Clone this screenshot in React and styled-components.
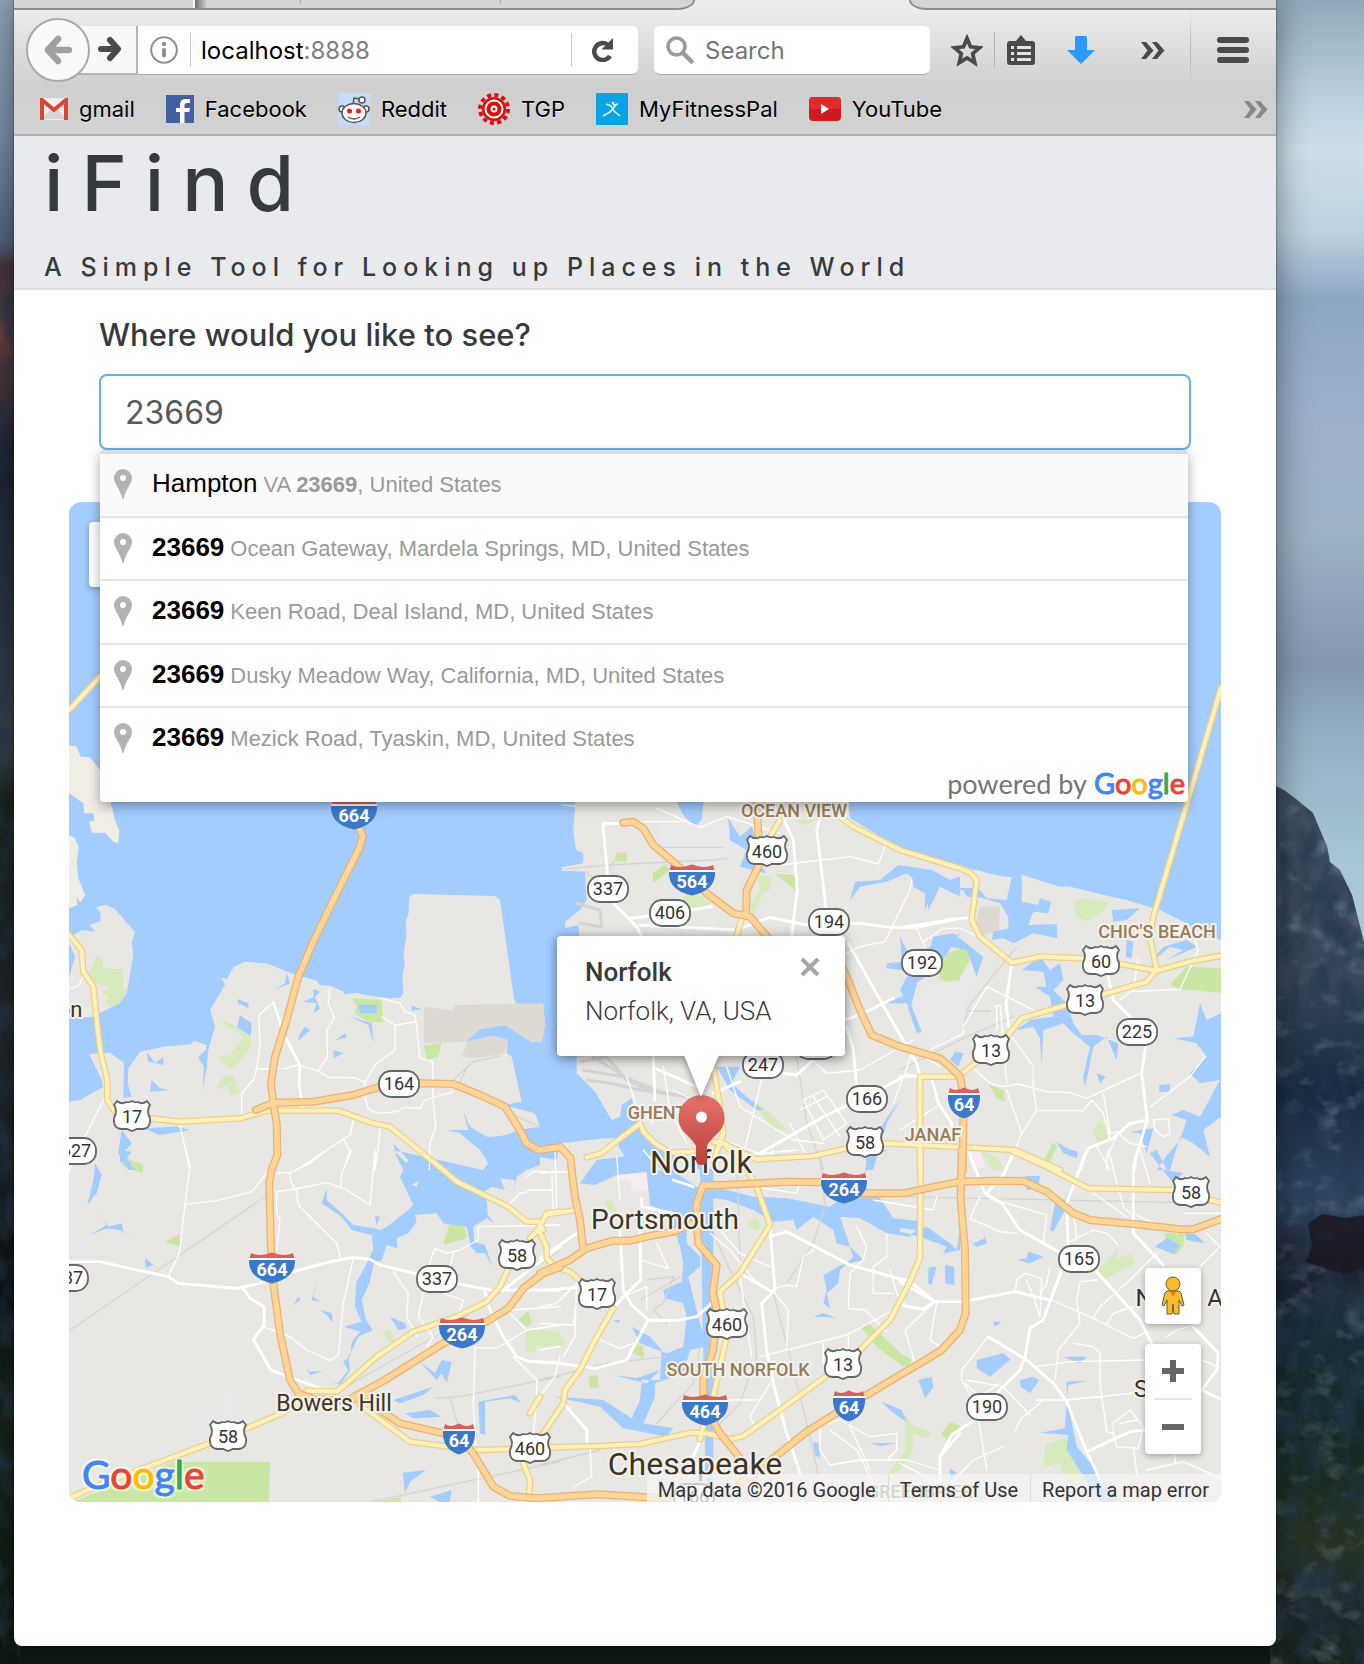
import React from "react";
import styled, { createGlobalStyle } from "styled-components";

const ui = `Inter, "Noto Sans", sans-serif`;
const arial = `"Liberation Sans", Arial, sans-serif`;
const roboto = `Roboto, "Noto Sans", sans-serif`;
const geometric = `Lato, "Noto Sans", sans-serif`;

const GlobalStyle = createGlobalStyle`
  *, *::before, *::after { box-sizing: border-box; }
  body { margin: 0; background: #16211f; font-family: ${ui}; color: #373a3c; }
  button, input { font: inherit; color: inherit; margin: 0; }
  button { padding: 0; border: 0; background: none; cursor: pointer; }
  a { color: inherit; text-decoration: none; }
  h1, h2, p, ul { margin: 0; padding: 0; font-weight: 400; }
  ul { list-style: none; }
  svg { display: block; flex: none; }
`;

/* ---------- Desktop and window ---------- */

const Desktop = styled.div`
  position: relative;
  display: flex;
  min-height: 100vh;
  padding: 0 88px 18px 14px;
  overflow: hidden;
`;

const WallpaperArt = styled.svg`
  position: absolute;
  inset: 0;
  width: 100%;
  height: 100%;
`;

const Window = styled.div`
  position: relative;
  flex: 1;
  min-width: 0;
  display: flex;
  flex-direction: column;
  background: #fff;
  border-radius: 0 0 8px 8px;
  box-shadow: 0 0 2px rgba(0, 0, 0, 0.7), 0 0 34px rgba(0, 0, 0, 0.45);
`;

/* ---------- Browser chrome ---------- */

const TabStrip = styled.div`
  display: flex;
  justify-content: space-between;
  height: 10px;
  background: #ececec;
`;

const TabsBefore = styled.div`
  display: flex;
  width: 681px;
  background: #d4d4d4;
  border: solid #8c8c8c;
  border-width: 0 2px 2px 0;
  border-radius: 0 0 18px 0 / 0 0 10px 0;
`;

const TabsAfter = styled.div`
  flex: 1;
  margin-left: 214px;
  background: #d4d4d4;
  border: solid #8c8c8c;
  border-width: 0 0 2px 2px;
  border-radius: 0 0 0 18px / 0 0 0 10px;
`;

const PinnedTab = styled.div`
  width: 181px;
  border-right: 2px solid #f4f4f4;
`;

const PinnedShadow = styled.div`
  width: 12px;
  background: linear-gradient(90deg, #6f6f6f, #d4d4d4);
`;

const TabStub = styled.div`
  width: ${(p) => p.$width}px;
  height: 4px;
  border-right: 1px solid #a9a9a9;
`;

const Chrome = styled.div`
  background: linear-gradient(#ececec, #cfcfcf 78px, #d2d2d2);
  border-bottom: 2px solid #b0b0b0;
`;

const Toolbar = styled.div`
  display: flex;
  align-items: center;
  height: 80px;
  padding: 0 27px 0 12px;
`;

const BackButton = styled.button`
  position: relative;
  z-index: 1;
  display: grid;
  place-items: center;
  width: 64px;
  height: 64px;
  border: 2px solid #a9a9a9;
  border-radius: 50%;
  background: #fafafa;
`;

const ForwardButton = styled.button`
  display: flex;
  align-items: center;
  justify-content: flex-end;
  width: 62px;
  height: 49px;
  margin-left: -14px;
  padding-right: 14px;
  background: #f8f8f8;
  border-right: 2px solid #b4b4b4;
  border-bottom: 2px solid #b4b4b4;
`;

const UrlBar = styled.div`
  display: flex;
  align-items: center;
  flex: 1;
  height: 49px;
  padding: 0 20px 0 12px;
  background: #fff;
  border-bottom: 1px solid #aaa;
  border-radius: 0 6px 6px 0;
`;

const FieldRule = styled.span`
  width: 1px;
  height: 34px;
  margin: ${(p) => p.$margin};
  background: #c6c6c6;
`;

const Address = styled.span`
  flex: 1;
  padding-top: 2px;
  font-size: 24px;
  line-height: 32px;
  color: #808080;
`;

const Host = styled.span`
  color: #000;
`;

const SearchBox = styled.label`
  display: flex;
  align-items: center;
  width: 276px;
  height: 49px;
  margin-left: 16px;
  padding-left: 12px;
  background: #fff;
  border-bottom: 1px solid #aaa;
  border-radius: 6px;
`;

const SearchInput = styled.input`
  flex: 1;
  min-width: 0;
  padding: 2px 0 0 11px;
  border: 0;
  outline: 0;
  background: none;
  font-size: 24px;
  line-height: 32px;
  &::placeholder { color: #757575; opacity: 1; }
`;

const ToolIcons = styled.div`
  display: flex;
  align-items: center;
  margin-left: 21px;
`;

const ToolButton = styled.button`
  display: grid;
  place-items: center;
  width: 32px;
  height: 36px;
  margin-left: ${(p) => p.$gap || 0}px;
`;

const ToolRule = styled.span`
  width: 1px;
  height: ${(p) => p.$height}px;
  margin-left: ${(p) => p.$gap}px;
  background: ${(p) => (p.$fade ? "linear-gradient(#e6e6e6, #b4b4b4, #d2d2d2)" : "#b4b4b4")};
`;

const Bookmarks = styled.nav`
  display: flex;
  align-items: center;
  height: 44px;
  padding: 0 8px 6px 26px;
  font-size: 22px;
  line-height: 32px;
  color: #000;
`;

const Bookmark = styled.a`
  display: flex;
  align-items: center;
  gap: 11px;
  margin-right: 31px;
  text-shadow: 0 1px 0 #eee;
`;

const Spacer = styled.span`
  flex: 1;
`;

/* ---------- Page ---------- */

const Header = styled.header`
  height: 154px;
  padding: 0 30px;
  background: #e9eaed;
  border-bottom: 2px solid #dfe0e1;
`;

const Brand = styled.h1`
  font-size: 77px;
  font-weight: 500;
  line-height: 94px;
  letter-spacing: 18px;
`;

const Tagline = styled.p`
  margin-top: 20px;
  font-size: 25px;
  font-weight: 500;
  line-height: 34px;
  letter-spacing: 6px;
`;

const Main = styled.main`
  padding: 26px 55px 144px;
`;

const SearchForm = styled.form`
  position: relative;
  z-index: 2;
  padding: 0 30px;
  margin-bottom: 52px;
`;

const Question = styled.label`
  display: block;
  margin-bottom: 20px;
  font-size: 31px;
  font-weight: 500;
  line-height: 38px;
`;

const PlaceInput = styled.input`
  display: block;
  width: 100%;
  height: 76px;
  padding: 0 24px;
  border: 2px solid #66afe9;
  border-radius: 8px;
  outline: 0;
  background: #fff;
  font-size: 32px;
  color: #55595c;
`;

const Suggestions = styled.div`
  position: absolute;
  top: 100%;
  left: 31px;
  right: 33px;
  height: 352px;
  background: #fff;
  border-top: 4px solid #dcdcdc;
  border-radius: 4px;
  box-shadow: 0 4px 12px rgba(0, 0, 0, 0.34);
  font-family: ${arial};
`;

const Suggestion = styled.li`
  display: flex;
  align-items: center;
  height: 64px;
  padding: 0 14px 2px;
  gap: 20px;
  border-top: 2px solid #e6e6e6;
  color: #999;
  font-size: 22px;
  line-height: 60px;
  cursor: default;
  &:nth-child(even) { height: 63px; }
  &:first-child { height: 62px; border-top: 0; background: #fafafa; }
`;

const SuggestionText = styled.span`
  white-space: nowrap;
`;

const Match = styled.span`
  margin-right: 6px;
  font-size: 26px;
  font-weight: ${(p) => (p.$bold ? 700 : 400)};
  color: #000;
`;

const PoweredBy = styled.p`
  position: absolute;
  right: 3px;
  bottom: 0;
  font-family: ${geometric};
  font-size: 27px;
  line-height: 36px;
  color: #757575;
`;

const Wordmark = styled.span`
  margin-left: 7px;
  font-size: 29px;
  -webkit-text-stroke: 1px currentColor;
`;

const Tint = styled.span`
  color: ${(p) => p.$color};
`;

const MapPanel = styled.section`
  position: relative;
  height: 1000px;
  overflow: hidden;
  border-radius: 12px;
  font-family: ${roboto};
`;

const MapArt = styled.svg`
  width: 100%;
  height: 100%;
`;

const MapTypeControl = styled.div`
  position: absolute;
  top: 20px;
  left: 20px;
  width: 200px;
  height: 65px;
  background: #fff;
  border-radius: 4px;
  box-shadow: 0 2px 6px rgba(0, 0, 0, 0.3);
`;

const InfoWindow = styled.div`
  position: absolute;
  top: 434px;
  left: calc(50% - 88px);
  width: 288px;
  height: 120px;
  padding: 17px 28px;
  background: #fff;
  border-radius: 4px;
  box-shadow: 0 2px 12px rgba(0, 0, 0, 0.5);
  font-size: 26px;
  line-height: 39px;
  color: #373a3c;
`;

const InfoTitle = styled.h2`
  font-size: 26px;
  font-weight: 500;
`;

const InfoAddress = styled.p`
  font-weight: 300;
  white-space: nowrap;
`;

const CloseButton = styled.button`
  position: absolute;
  top: 19px;
  right: 23px;
  width: 24px;
  height: 24px;
  display: grid;
  place-items: center;
`;

const InfoTail = styled.svg`
  position: absolute;
  top: 119px;
  left: 126px;
  overflow: visible;
  filter: drop-shadow(0 3px 3px rgba(0, 0, 0, 0.4));
  clip-path: inset(0 -16px -16px -16px);
`;

const MapControls = styled.div`
  position: absolute;
  right: 20px;
  bottom: 48px;
  display: flex;
  flex-direction: column;
  gap: 20px;
`;

const ControlCard = styled.div`
  width: 56px;
  background: #fff;
  border-radius: 4px;
  box-shadow: 0 2px 6px rgba(0, 0, 0, 0.3);
`;

const ControlButton = styled.button`
  display: grid;
  place-items: center;
  width: 56px;
  height: ${(p) => (p.$tall ? 56 : 54)}px;
`;

const ControlRule = styled.hr`
  height: 2px;
  margin: 0 9px;
  border: 0;
  background: #e6e6e6;
`;

const MapLogo = styled.a`
  position: absolute;
  left: 13px;
  bottom: 2px;
  font-family: ${geometric};
  font-size: 39px;
  line-height: 52px;
  -webkit-text-stroke: 1px currentColor;
  text-shadow: 0 0 3px #fff8, 2px 2px 2px #fffa, -2px -2px 2px #fffa, 2px -2px 2px #fffa, -2px 2px 2px #fffa;
`;

const Attribution = styled.div`
  position: absolute;
  right: 0;
  bottom: 0;
  display: flex;
  height: 28px;
  background: rgba(245, 245, 245, 0.72);
  font-size: 20px;
  line-height: 32px;
  color: #333;
`;

const AttributionItem = styled.span`
  padding: 0 12px 0 11px;
  & + & { border-left: 1px solid #dcdcdc; }
`;

/* ---------- Small drawings ---------- */

const BackArrow = () => (
  <svg width="28" height="30" viewBox="0 0 28 30" fill="none" stroke="#a0a0a0" strokeWidth="6.5" strokeLinecap="round" strokeLinejoin="round">
    <path d="M25 15H6M14 4 4 15l10 11" />
  </svg>
);
const ForwardArrow = () => (
  <svg width="24" height="26" viewBox="0 0 24 26" fill="none" stroke="#4a4a4a" strokeWidth="6" strokeLinecap="round" strokeLinejoin="round">
    <path d="M3 13h15M12 4l8 9-8 9" />
  </svg>
);
const InfoIcon = () => (
  <svg width="28" height="28" viewBox="0 0 28 28">
    <circle cx="14" cy="14" r="12.8" fill="none" stroke="#8f8f8f" strokeWidth="2" />
    <circle cx="14" cy="8" r="2.2" fill="#8f8f8f" />
    <rect x="12" y="12" width="4" height="9.5" rx="2" fill="#8f8f8f" />
  </svg>
);
const ReloadIcon = () => (
  <svg width="24" height="24" viewBox="0 0 24 24">
    <path d="M20 18A8.500 8.500 0 1 1 17.500 6.500" fill="none" stroke="#4a4a4a" strokeWidth="4.500" />
    <path d="M23 0v11.500H11.500z" fill="#4a4a4a" />
  </svg>
);
const SearchIcon = () => (
  <svg width="28" height="28" viewBox="0 0 28 28" fill="none" stroke="#999" strokeLinecap="round">
    <circle cx="10.5" cy="10.5" r="8.5" strokeWidth="3.5" />
    <path d="m17 17 8.500 8.500" strokeWidth="4.500" />
  </svg>
);
const StarIcon = () => (
  <svg width="32" height="33" viewBox="0 0 32 33">
    <path d="m16 4.500 3.500 8.300 9 .9-6.800 6 2 9L16 24l-7.700 4.700 2-9-6.800-6 9-.9z" fill="none" stroke="#4a4a4a" strokeWidth="3.800" />
  </svg>
);
const ListIcon = () => (
  <svg width="28" height="31" viewBox="0 0 28 31">
    <path d="M3 6h6l5-6 5 6h6a3 3 0 0 1 3 3v18a3 3 0 0 1-3 3H3a3 3 0 0 1-3-3V9a3 3 0 0 1 3-3z" fill="#4a4a4a" />
    <path d="M4 11h3v3H4zM10 11h14v3H10zM4 17h3v3H4zM10 17h14v3H10zM4 23h3v3H4zM10 23h14v3H10z" fill="#e2e2e2" />
  </svg>
);
const DownloadIcon = () => (
  <svg width="28" height="28" viewBox="0 0 28 28">
    <path d="M8 1.500Q8 0 9.500 0h9Q20 0 20 1.500V14h8L14 28 0 14h8z" fill="#2b98fb" />
  </svg>
);
const Chevrons = ({ color }) => (
  <svg width="24" height="17" viewBox="0 0 24 17" fill={color}>
    <path d="M0 0h5l7.500 8.500L5 17H0l6.500-8.500zM11 0h5l7.500 8.500L16 17h-5l6.500-8.500z" />
  </svg>
);
const MenuIcon = () => (
  <svg width="32" height="26" viewBox="0 0 32 26" fill="#4a4a4a">
    <rect width="32" height="6" rx="3" />
    <rect y="10" width="32" height="6" rx="3" />
    <rect y="20" width="32" height="6" rx="3" />
  </svg>
);
const GmailIcon = () => (
  <svg width="28" height="22" viewBox="0 0 28 22">
    <rect width="28" height="22" rx="2" fill="#eee" />
    <path d="m2 21 9-10h6l9 10z" fill="#d6d6d6" />
    <path d="M2 22V2l12 10L26 2v20" fill="none" stroke="#db4437" strokeWidth="4" />
  </svg>
);
const FacebookIcon = () => (
  <svg width="28" height="28" viewBox="0 0 28 28">
    <rect width="28" height="28" fill="#4460a0" />
    <path d="M14 28V17h-4v-4h4v-3c0-4 2-6 6-6h4v4h-3c-2 0-2.500 1-2.500 2.500V13H24l-.7 4h-4.800v11z" fill="#fff" />
  </svg>
);
const RedditIcon = () => (
  <svg width="32" height="32" viewBox="0 0 32 32">
    <rect width="32" height="32" fill="#c4dcf6" />
    <g fill="#fff" stroke="#555" strokeWidth="1.500">
      <path d="m15 12 1-7 6 1" fill="none" />
      <circle cx="24" cy="7" r="3" />
      <circle cx="4" cy="16" r="3" />
      <circle cx="28" cy="16" r="3" />
      <ellipse cx="16" cy="20" rx="12" ry="9.5" />
      <path d="M10 24q6 4 12 0" fill="none" />
    </g>
    <circle cx="11.5" cy="18" r="2.5" fill="#ee1c1c" />
    <circle cx="20.5" cy="18" r="2.5" fill="#ee1c1c" />
  </svg>
);
const GearIcon = () => (
  <svg width="32" height="32" viewBox="0 0 32 32" fill="none" stroke="#e00b0b">
    <circle cx="16" cy="16" r="14" strokeWidth="4" strokeDasharray="4 3.330" />
    <circle cx="16" cy="16" r="12" fill="#e00b0b" stroke="none" />
    <circle cx="16" cy="16" r="8.5" stroke="#fff" strokeWidth="2" />
    <circle cx="16" cy="16" r="2.5" stroke="#fff" strokeWidth="2" />
  </svg>
);
const RunnerIcon = () => (
  <svg width="32" height="32" viewBox="0 0 32 32">
    <rect width="32" height="32" fill="#0aa3e4" />
    <path d="m10 11 5 2 3 5 6 5M20 12l-6 7-7 4M17 12l5-1" fill="none" stroke="#d8f0fb" strokeWidth="1.600" />
    <circle cx="17" cy="10" r="1.3" fill="#fff" />
  </svg>
);
const YouTubeIcon = () => (
  <svg width="32" height="24" viewBox="0 0 32 24">
    <rect width="32" height="24" rx="4" fill="#cd1c1f" />
    <rect width="32" height="12" rx="4" fill="#e22b28" />
    <path d="m12 7 8 5-8 5z" fill="#fff" />
  </svg>
);
const PinIcon = () => (
  <svg width="18" height="30" viewBox="0 0 18 30">
    <path fillRule="evenodd" d="M9 0a9 9 0 0 1 9 9c0 6-6 10-8.500 21h-1C6 19 0 15 0 9a9 9 0 0 1 9-9zm0 6a3 3 0 1 0 0 6 3 3 0 0 0 0-6z" fill="#b3b3b3" />
  </svg>
);
const PegmanIcon = () => (
  <svg width="24" height="40" viewBox="0 0 24 40" stroke="#6b5a2f" strokeWidth="1">
    <path d="M6 15h12l2 2 3 12-2 1-3-6v14h-5l-1-10-1 10H6V24l-3 6-2-1L4 17z" fill="#fbbc2c" />
    <path d="m8.500 15.500 3.500 5 3.500-5z" fill="#e0801d" stroke="none" />
    <circle cx="12" cy="8" r="7" fill="#fbbc2c" />
  </svg>
);

/* ---------- Map data: six survey sheets, three units to a pixel ---------- */

const SHEETS = {
  A: [60, 790],
  B: [540, 790],
  C: [900, 790],
  D: [60, 1150],
  E: [540, 1150],
  F: [900, 1150],
};

const trace = (line) => {
  let [ox, oy] = SHEETS.A;
  const out = [];
  const tokens = line.split(/\s+/).filter(Boolean);
  for (let i = 0; i < tokens.length; i += 1) {
    if (SHEETS[tokens[i]]) [ox, oy] = SHEETS[tokens[i]];
    else {
      out.push(`${(ox + tokens[i] / 3).toFixed(1)} ${(oy + tokens[i + 1] / 3).toFixed(1)}`);
      i += 1;
    }
  }
  return out;
};
const lines = (list) => list.map((l) => `M${trace(l).join("L")}`).join("");
const areas = (list) => list.map((l) => `M${trace(l).join("L")}Z`).join("");

const beige = [
  "A 27 -135 50 -130 62 -100 90 -98 120 -60 152 36 165 90 178 122 175 160 160 155 135 128 95 128 87 95 103 92 100 70 72 70 70 40 35 15 27 10",
  "A 27 135 45 145 57 175 50 215 55 265 75 315 62 338 50 320 52 345 27 355",
];

const land = [
  "A 27 440 40 435 65 420 105 425 90 405 122 392 120 365 108 352 138 344 165 358 225 427 215 455 220 495 200 610 175 642 120 668 100 680 27 685",
  "A 27 935 60 930 130 890 125 870 88 793 150 788 192 818 190 925 215 920 203 880 205 835 240 785 310 770 395 762 400 752 440 765 438 778 415 803 432 830 428 900 440 830 445 780 465 710 450 660 495 585 483 562 500 567 522 530 555 515 618 520 700 552 770 572 780 585 815 588 850 605 852 613 890 608 920 616 990 625 1022 622 1030 610 1027 560 1035 520 1030 500 1040 430 1036 395 1045 375 1048 320 1060 312 1305 318 1320 330 1362 625 1368 640 1450 645 1455 705 1445 755 1415 755 1335 705 1260 718 1215 755 1300 738 1343 750 1340 790 1355 800 1385 935 1330 945 1425 970 1440 1010 1375 1020 1340 1035 1300 1040 1330 1080 1290 1140 1370 1110 1430 1100 1490 1110 B 60 1060 195 1045 240 1045 235 1070 270 1120 400 1090 E 520 60 520 1200 D 0 1200 0 0 A 27 1140",
  "B 105 0 105 60 100 120 108 180 130 190 130 220 65 232 65 242 135 245 140 330 120 360 75 395 75 415 115 405 118 436 118 760 110 800 110 850 165 905 215 990 240 980 245 945 275 925 290 990 300 1010 330 1060 420 1100 480 1140 E 500 1200 F 963 1200 C 963 450 930 440 850 395 780 360 680 330 640 322 510 290 480 290 365 254 335 262 300 258 220 238 0 178 B 1080 175 930 85 920 0",
  "B 60 42 105 45 105 52 70 48",
];

const tan = [
  "A 1092 650 1180 662 1180 645 1450 640 1455 705 1445 758 1405 750 1335 705 1260 718 1215 755 1092 760",
  "A 1222 755 1300 738 1343 750 1335 790 1250 805 1205 800",
  "C 240 350 300 350 297 420 240 440 225 410",
];

const campus = [
  "B 360 100 560 100 600 165 520 240 400 215 360 150",
  "C 180 520 240 500 250 530 190 640 200 700 100 780 60 760 40 600 120 590",
  "B 1130 600 1260 560 1260 740 1180 740",
  "D 495 710 520 710 515 815 490 815",
  "D 395 805 580 805 580 830 395 830",
];

const pink = ["E 240 60 320 72 325 120 275 125 272 95 232 85", "F 200 0 240 0 255 50 230 55"];

const parks = [
  "A 875 625 965 630 970 695 930 697 885 672 890 645",
  "A 1092 768 1145 758 1135 800 1100 810",
  "D 180 15 250 45 248 70 190 50",
  "D 27 1060 340 936 630 936 627 1056 27 1056",
  "D 315 275 360 252 360 292",
  "D 1170 215 1215 232 1220 265 1150 285",
  "D 1375 510 1405 482 1415 520 1400 530",
  "D 940 1056 1023 1042 1023 1056",
  "B 230 187 260 190 260 217 228 212",
  "B 340 280 337 250 375 222 390 240",
  "B 705 252 765 255 765 300",
  "B 1210 510 1260 475 1260 570 1215 575 1195 550",
  "C 135 490 205 470 210 510 185 555 150 575 115 565 140 530",
  "C 810 585 860 530 963 535 963 608 840 598",
  "C 265 882 310 900 315 935 290 925",
  "C 460 1055 470 1070 450 1115 430 1115",
  "E 270 605 290 580 310 590 312 625",
  "E 145 680 172 675 177 712 150 715",
  "E 965 535 985 520 1115 640 1090 650 1010 590",
  "E 1205 850 1235 815 1260 830 1220 870",
  "F 790 250 855 250 850 290 825 315",
  "F 0 610 35 630 25 648 0 635",
  "F 125 855 150 815 178 830 150 870",
];

const lightParks = [
  "A 87 550 110 497 130 510 130 535 188 538 190 590 200 610 175 645 135 645 145 620 125 605 150 590 105 580",
  "A 470 685 510 700 572 740 572 775 515 840 470 800 510 795 550 740",
  "A 470 890 490 860 520 855 540 910 515 918 500 885 480 900",
  "B 655 255 695 262 690 300 670 310 640 375 630 350 660 300",
  "B 425 320 470 310 515 340 450 360",
  "B 640 930 680 960 740 1020 690 1015",
  "B 760 90 830 90 790 105",
  "C 520 335 560 325 630 338 600 370 560 395 530 380",
  "C 580 1020 600 990 625 1010 620 1050 590 1055",
  "C 240 1080 290 1100 310 1140 280 1140",
  "D 965 545 990 540 1005 575 990 575",
  "D 1400 535 1450 545 1500 545 1500 585 1430 590 1420 608 1395 605",
  "E 0 540 40 540 78 575 70 585 0 585",
  "E 620 220 645 200 665 230 650 245",
  "E 195 155 215 150 230 185 205 180",
  "E 1095 790 1110 820 1175 850 1160 865 1120 850 1120 900 1080 960 1040 980 1095 900",
  "F 600 355 655 295 650 330 690 310 705 340 610 390 595 375",
  "F 437 880 500 865 510 910 570 1000 500 1000 480 940 430 950",
];

const water = [
  "D 1000 0 1040 40 1020 80 1060 165 1045 180 980 230 960 240 940 235 880 225 845 190 800 150 800 115 785 160 845 200 875 240 935 255 940 300 915 350 888 400 885 470 905 515 852 530 900 545 875 575 870 620 850 635 865 660 835 700 810 690 840 705 870 660 865 620 895 560 938 540 918 510 905 450 928 400 942 340 965 330 980 285 1012 295 1010 265 1045 250 1070 215 1065 195 1130 190 1150 220 1220 230 1232 290 1250 308 1275 310 1297 348 1275 285 1243 275 1240 230 1280 205 1303 220 1283 195 1280 145 1265 130 1295 110 1335 120 1320 85 1365 90 1360 130 1370 80 1400 60 1440 45 1440 0 A 1440 1080 1400 1060 1330 1040 1280 1040 1230 1010 1210 965 1225 1020 1160 1020 1200 1030 1260 1080 1285 1120 1270 1140",
  "E 170 30 120 100 165 105 230 75 320 65 330 165 400 195 400 225 420 290 430 340 425 395 370 420 375 445 430 460 440 500 430 590 380 610 300 580 275 530 330 560 365 600 360 690 305 690 300 750 275 805 190 750 120 745 40 740 115 755 180 770 250 835 380 860 400 835 310 820 345 740 345 700 430 670 450 600 500 590 475 500 445 380 480 350 480 320 440 280 440 230 470 215 460 180 490 140 560 150 640 180 700 215 760 210 770 240 820 200 880 240 890 280 930 290 970 330 905 345 850 375 860 420 850 460 870 475 860 430 895 400 900 360 940 320 920 260 900 200 960 205 1040 250 1110 260 1150 215 1060 205 1010 130 970 110 985 30 1040 0 980 0 975 90 870 170 740 145 640 140 540 115 470 110 410 70 400 0",
  "B 410 36 490 36 485 90 465 110 430 75",
  "B 565 85 600 140 635 110 655 160 640 200 680 250 600 230 620 180 570 150",
  "C 335 262 365 255 365 335 415 345 420 325 453 335 445 370 400 365 385 405 470 402 472 445 400 430 340 460 310 445 275 450 280 425 325 415 325 380 300 340 240 322 200 320 190 300 130 285 90 310 75 365 75 310 40 290 35 250 0 235 60 240 100 265 160 290 235 295 260 325 320 330",
  "C 420 500 450 540 480 520 490 570 460 600 500 640 520 700 545 735 590 735 655 760 650 810 620 740 580 770 555 890 550 860 570 770 520 730 490 700 430 720 425 825 420 745 400 710 350 720 390 690 460 680 450 620 405 590 440 590 430 545 365 540",
  "C 963 670 920 690 900 640 880 740 820 745 890 760 920 800 870 850 900 880 960 870 900 980 850 960 815 975 860 990 840 1050 790 1110 770 1140 C 810 1140 840 1040 880 1060 930 1100 910 1020 963 980",
  "C 100 440 160 430 250 500 230 560 200 480 150 470 80 520",
  "C 470 1055 500 1075 533 1085 530 1105 490 1090",
  "C 590 850 617 860 600 880",
  "C 778 885 810 882 808 905 778 905",
  "C 635 360 720 355 680 390 640 395",
  "C 750 520 810 470 850 480 800 510 890 470 860 450 790 470",
  "C 680 450 700 455 695 505 678 500",
  "C 0 440 25 490 5 510",
  "C 20 560 60 545 30 660 0 600",
  "C 165 785 190 790 175 830 150 810",
  "C 690 1025 760 1015 740 1090 720 1030",
  "B 930 330 945 275 1020 270 1075 225 1175 240 1230 270 1260 260 1260 320 1200 290 1165 360 1160 300 1100 250 1040 275 960 290",
  "B 1040 520 1090 515 1080 440 1105 490 1150 480 1260 430 1190 540 1110 590 1115 650 1145 725 1130 730 1100 640 1040 640 1105 610 1120 560 1085 540 1040 535",
  "B 530 830 600 830 575 880 620 920 670 960 650 960 570 900",
  "B 1085 920 1030 1000 1000 1060 975 1140 1000 1140 1020 1060 1045 990",
  "A 532 627 566 640 565 655 535 640",
  "A 540 675 575 700 572 738 532 712",
  "A 680 548 690 580 640 602 675 580",
  "A 760 597 780 605 765 620 780 655 760 670 770 640 728 635 760 622",
  "A 735 710 750 720 715 752 718 735",
  "A 820 780 850 790 822 805",
  "A 825 752 855 730 860 740",
  "A 895 643 950 645 950 670 900 670",
  "A 870 680 935 700 940 760 925 705",
  "A 1055 647 1085 658 1055 662",
  "A 260 785 285 820 310 800 310 825 265 815",
  "A 275 870 300 895 328 900 270 905",
  "A 27 460 45 500 27 560",
  "A 185 1020 215 1060 190 1090 225 1140 205 1140 175 1090",
  "A 1000 1060 1045 1110 1030 1140 1010 1100",
  "A 250 1015 350 1010 390 1020 300 1035",
  "D 180 0 215 5 200 25 180 40",
  "D 105 40 125 75 110 130 82 165 100 90",
  "D 120 185 145 230 185 220 190 245 235 280 180 240 140 235 90 255 140 225",
  "D 255 325 280 345 257 353",
  "D 700 465 715 440 722 450",
  "D 775 385 760 440 780 455 755 450",
  "D 780 480 815 490 818 518 800 495",
  "D 990 500 1035 520 1040 535 1015 540",
  "D 1080 635 1125 670 1145 630 1175 635 1160 700 1145 670 1130 690",
  "D 1000 750 1120 710 1090 735 1020 760",
  "D 1035 790 1110 780 1145 800 1060 805",
  "D 1255 755 1365 735 1385 760 1350 745 1275 755 1275 855 1260 850",
  "D 1028 968 1098 960 1050 995 1035 1028",
  "D 1110 1040 1175 1020 1170 1056 1140 1056",
  "D 740 655 750 665 790 663 750 675",
  "D 1055 105 1075 93 1070 110",
  "D 945 198 960 200 950 225",
  "E 820 500 850 490 890 505 850 500",
  "E 220 675 290 685 360 660 320 700",
  "E 220 510 240 510 235 520",
  "E 1165 355 1190 350 1175 400 1165 400",
  "E 1215 360 1240 360 1240 405 1220 400",
  "E 1135 690 1175 680 1180 710 1155 745",
  "E 1025 755 1085 780 1100 815 1060 790",
  "E 820 875 835 880 840 925 825 915",
  "E 990 880 1070 880 1020 888",
  "F 0 235 60 240 80 230 150 280 170 300 180 240 180 300 130 310 140 290 60 260 0 245",
  "F 220 280 255 265 250 240 260 280 230 292 200 265",
  "F 465 160 495 180 460 245 450 240",
  "F 765 290 800 265 840 285 820 312",
  "F 855 250 885 252 915 280 860 270",
  "F 375 78 420 78 415 115 380 120",
  "F 135 345 163 350 163 405 135 400",
  "F 90 350 108 352 95 405 85 400",
  "F 350 330 380 325 385 305 430 320 390 340",
  "F 230 630 310 610 332 628 270 680 230 655",
  "F 360 690 400 680 418 690 390 730 362 710",
  "F 55 690 85 685 98 715 75 745",
  "F 420 848 495 835 500 750 520 840 530 890 590 960 655 1056 600 1056 500 900 505 855",
  "F 280 515 305 515 285 530",
  "F 500 695 560 692 505 705 500 745",
  "F 490 620 560 620 540 640",
  "F 150 955 170 970 150 990",
  "F 770 0 800 60 850 70 820 100 780 50 750 10",
];

const rails = [
  "D 27 543 615 140",
  "B 65 238 200 225 520 210 560 205",
  "B 360 172 550 172",
  "B 140 245 180 290 230 200",
  "B 770 800 800 1000 850 1140 E 840 20 855 170 820 280 740 400",
  "E 510 225 560 340 640 500 650 620 600 760 500 860",
  "E 700 430 750 620 810 860 840 1000",
  "E 0 690 200 640 380 620",
  "E 320 390 400 380 370 460 340 480 380 520",
  "E 300 450 420 380",
  "E 480 590 460 700 350 820",
  "C 0 840 200 740 340 680",
  "C 190 720 205 650 350 470",
  "C 205 663 270 663",
  "F 0 140 963 160",
  "D 830 725 1160 540 1500 300",
  "D 1125 745 1200 740 1500 680",
  "D 1170 740 1195 830",
  "D 930 1056 1500 935 E 0 945 180 900",
  "A 1180 870 1240 815 1320 798",
  "A 1200 880 1220 830",
  "A 1350 970 1440 1010",
  "E 590 0 600 340",
];

const docks = [
  "B 110 340 180 360 185 410 120 400",
  "B 120 815 200 800 260 870 330 900 440 920 300 900 210 880 140 870",
  "B 130 840 250 860 360 905",
  "B 160 800 300 890",
];

const streets = [
  "A 810 597 805 640 823 685 800 720 803 800 775 843",
  "A 590 837 675 835 715 825 775 843 805 862 885 863 915 878 945 825 1005 780 1005 705 965 680",
  "A 640 637 597 675 600 770 590 835 580 870 545 910 545 970",
  "A 965 625 1020 640 1035 665 1065 675 1068 695 1010 705",
  "A 1068 695 1080 805 1118 815 1118 920 1127 1010 1110 1060 1108 1140",
  "A 915 880 915 920 925 957 955 970 1010 965 1035 952 1080 955 1095 930 1180 905",
  "A 880 990 870 1035 800 1080 710 1140",
  "A 850 1045 870 1085 850 1140",
  "A 960 1010 955 1070 945 1140 D 945 0 930 165 860 120 800 98 690 120 650 125 650 190 660 210 650 300",
  "A 360 1005 390 1140 D 378 0 390 50 375 165 358 310 325 380",
  "D 375 163 470 152 575 125 620 70 690 68 750 40 800 0",
  "D 690 68 692 95 710 125 715 165 830 280 842 325",
  "D 875 0 845 70 842 110",
  "A 130 930 60 1070 27 1140",
  "A 27 597 55 588 70 560",
  "D 880 325 850 460 835 615 812 632 740 600 690 560 610 530",
  "D 1000 365 1045 430 1040 500 1070 560",
  "D 1090 430 1075 500 1120 560 1100 590",
  "D 1180 310 1150 430 1210 450 1200 480",
  "D 1125 295 1105 350",
  "D 1125 295 1160 310 1200 300 1255 270 1255 230 1500 225",
  "D 1245 590 1240 770 1245 855 1255 950 1255 1056",
  "D 1245 592 1310 595 1400 540 1500 525",
  "D 1360 620 1430 690 1430 750 1420 850",
  "D 1500 620 1485 680 1430 750",
  "D 1340 480 1400 540",
  "D 1350 480 1500 470",
  "D 1400 80 1420 65 1500 65",
  "D 1405 120 1480 120",
  "D 1475 65 1480 180",
  "D 1340 170 1380 130 1405 125",
  "B 350 55 480 112 560 80 720 130",
  "B 300 95 430 95",
  "B 720 225 930 200 1015 222 1035 170",
  "B 920 490 960 470 1035 455 1110 300 1115 270",
  "B 1130 415 1155 470",
  "B 600 1140 665 865",
  "B 550 1050 680 1100",
  "B 560 830 600 950 760 1050 850 1060",
  "B 790 930 850 900 920 1000 850 1050 790 930",
  "B 820 920 900 1040",
  "B 780 960 860 920",
  "B 750 1000 800 1100",
  "B 400 900 520 960",
  "B 260 860 290 950 340 1000",
  "B 370 830 390 960 440 1060",
  "B 390 950 460 1000 540 980",
  "B 1060 940 1120 780 1200 830",
  "B 740 740 860 850 960 840 1120 750",
  "C 70 455 130 415 180 415 225 435",
  "C 260 590 400 660",
  "C 260 590 190 710 190 730 90 780",
  "C 285 650 300 645 320 880",
  "C 290 650 290 720",
  "C 335 740 400 830 400 900 410 960 365 1030 320 900",
  "C 220 835 270 880 310 890 355 882 440 905 510 908 560 925 720 850",
  "C 410 962 550 962 575 930 610 970 630 1050",
  "C 610 910 630 1030 655 1025",
  "C 750 950 870 860 915 800",
  "C 690 605 840 598 895 480 880 440",
  "C 715 505 700 600",
  "C 760 990 805 985 810 1030 790 1040 765 1020 760 990",
  "C 365 1030 345 1080",
  "C 0 1020 110 950",
  "C 660 630 690 605",
  "C 655 1030 690 1060 740 1070",
  "C 590 1070 630 1140",
  "C 650 1040 620 1100 620 1140",
  "E 0 470 50 460 110 400",
  "E 0 520 100 525 105 480",
  "E 110 400 105 560 70 620",
  "E 250 440 320 410 320 480",
  "E 180 570 240 595 280 580",
  "E 510 250 570 300 650 400",
  "E 540 240 600 310 690 350",
  "E 600 380 635 620",
  "E 660 620 920 555 1060 480",
  "E 700 425 745 480 740 600",
  "E 690 420 740 405 770 410 790 320 820 300",
  "E 850 580 850 640",
  "E 925 475 975 480 1040 545",
  "E 950 230 980 290 970 330 930 370 925 470",
  "E 1040 250 1040 320 1000 350 1000 430 1060 430",
  "E 1050 360 1070 430 1100 470",
  "E 925 550 925 600",
  "E 650 750 500 750",
  "E 690 700 630 800 640 820",
  "E 830 830 900 810 990 860 1070 850 1070 900 1040 930",
  "E 840 835 840 900 870 945 960 930 1100 930 1200 960",
  "E 870 840 950 900 1000 1000",
  "E 930 830 990 960",
  "E 0 600 60 590",
  "E 1000 150 1180 180 1190 140",
  "E 150 890 155 980 100 1010",
  "E 230 20 240 150",
  "E 310 0 360 60",
  "E 0 70 90 65",
  "E 45 0 50 180",
  "E 560 20 770 0",
  "E 640 110 770 130 780 90",
  "E 300 330 385 355 350 280",
  "E 700 0 690 30",
  "F 270 145 440 195 430 280",
  "F 240 140 210 205 300 245 350 250",
  "F 520 190 530 260",
  "F 500 280 580 240 620 250 655 285",
  "F 580 130 680 200",
  "F 625 0 670 170 690 190",
  "F 720 0 750 100",
  "F 850 190 963 190",
  "F 700 190 740 210 830 250",
  "F 920 250 960 290 900 350",
  "F 345 430 350 390 375 370 425 385 420 500 400 440 380 390",
  "F 450 350 440 400 420 430",
  "F 540 400 530 450 540 520 475 600 465 690",
  "F 540 395 590 390",
  "F 455 450 580 505 700 565 740 545",
  "F 580 505 600 470 700 380 770 310",
  "F 620 525 640 490 700 470",
  "F 410 650 510 635 740 630",
  "F 520 580 580 590 600 610 600 700 620 845 640 850",
  "F 200 690 310 710 390 795",
  "F 410 750 500 750 740 725",
  "F 345 845 360 810 430 750",
  "F 640 850 640 820 690 780 730 830 715 895 650 890 640 850",
  "F 660 820 710 810",
  "F 700 890 710 970",
  "F 740 960 850 935 963 985",
  "F 825 910 825 940",
  "F 800 560 830 540 900 520",
  "F 905 630 963 655",
  "F 265 560 185 660 185 690 230 770 260 960",
  "F 195 700 240 740 300 700",
  "F 135 1020 220 930 310 890",
  "F 110 460 90 570 120 590",
  "F 100 460 15 540 45 640",
  "F 0 940 120 1000",
];

const avenues = [
  "A 640 637 675 740 720 825 717 880 728 955",
  "D 27 335 120 335 230 360 325 380 355 400 530 415 600 400 700 365 810 335 880 322 930 328 960 345 1070 372 1190 400 1300 422 1370 420 1500 420 E 0 422 110 412",
  "D 550 415 570 445 612 470 612 525 580 568 632 660 800 722",
  "D 1275 425 1290 480 1330 560 1370 620 1410 635 1500 637 E 0 637 60 640 165 655 260 630 325 510 410 512 470 500 520 455",
  "D 1330 420 1500 290 E 0 325 110 250",
  "D 640 800 720 780",
  "B 190 100 190 120 203 255",
  "B 190 100 250 100",
  "B 220 340 290 410 305 440",
  "B 270 385 330 378",
  "B 300 405 590 420 690 382 800 405 960 400 1050 412 1130 412 1260 385 C 0 412 50 410 150 388 215 383",
  "B 450 360 515 350",
  "B 730 85 760 150 772 300 755 436",
  "B 840 85 830 120 858 355",
  "B 925 460 1060 700 1130 820 1140 860",
  "B 915 690 970 670 1060 625",
  "B 920 710 940 780 950 885",
  "B 340 800 345 930",
  "B 345 835 470 890",
  "B 520 910 600 875",
  "B 730 850 770 855 820 810",
  "B 660 1090 850 980 1000 910 1100 855 1140 860",
  "C 0 860 60 860",
  "C 95 865 115 940 155 1000 155 1020",
  "C 335 520 318 640 328 720",
  "C 625 560 640 630 690 680",
  "C 737 765 725 850 742 990 690 1000 640 1045 565 1075 540 1140",
  "C 742 990 705 1110 705 1140",
  "C 205 1080 225 1140 F 220 40 255 130 305 160 360 240 475 305",
  "F 345 0 310 75 260 130",
  "F 560 0 500 160 505 300",
  "F 715 0 700 50 700 250 790 345",
  "F 485 360 430 510 390 535 375 620 360 660 290 730",
  "F 590 365 720 510 755 580",
  "F 0 465 65 478 105 455 190 455 345 425 450 450",
  "F 0 395 105 455",
  "F 265 560 380 630 460 700 500 755 560 905 610 1010",
  "F 560 905 690 845 735 840",
  "F 215 815 155 855 120 920 120 1000",
  "F 880 530 955 610 950 660 905 720 963 748",
  "E 240 240 250 420 275 465 325 510",
  "E 300 240 302 390 255 435 220 475",
  "E 305 145 305 170 400 190",
  "E 600 370 695 425",
  "E 690 230 705 420 665 460 680 600 700 700 740 850 780 970",
  "E 690 260 740 245 930 345 1110 395 1185 455 1260 455",
  "E 1080 465 1150 478 1185 455",
  "E 75 765 140 840 142 885",
  "E 490 850 455 930",
  "E 400 90 460 110",
  "E 1260 850 1200 920 1200 970",
];

const highways = [
  "A 27 -240 120 -340",
  "A 27 435 65 480 70 545 100 590 110 690 122 790 142 870 142 930 165 965",
  "A 270 985 360 995 540 985 620 962 835 962 940 1000 990 1010 1150 1140 D 1190 95 1345 170 1400 215 1435 215 1450 240 1435 238 1410 265",
  "D 1435 238 1460 190 1500 185 E 20 193 110 180",
  "D 1435 238 1460 290 1460 325 1485 350 E 90 365 130 400",
  "E 220 475 160 580 120 660 75 720 70 760 10 850",
  "D 27 1045 130 1000 450 880 560 835 700 775 740 722 830 725 860 700 950 620 1060 545 1190 500 1280 455 1320 410 1345 355",
  "D 900 765 1050 875 1150 888 1260 900 1500 892 E 30 892 180 888 300 882 450 848 500 850 570 868 610 858 720 780 850 685 960 600 1050 510 1110 395 1140 325 1142 0 B 1140 1140 1140 860 1260 860 C 175 860 225 820 320 740 365 685 500 645 620 610 740 575 770 540 750 440 760 380 870 10 963 -306",
  "B 885 70 940 110 1080 180 1260 235 C 210 248 230 270 215 390 240 440 335 518 420 500 550 505 660 522 770 542 880 512 963 497",
  "C 480 1140 345 1080 0 1062 B 1030 1060 920 1075 820 1098 650 1108 550 1060 520 1055",
  "F 330 0 440 50 565 115 820 120 963 158",
  "B 140 1102 180 1092 300 1000 310 1025 345 1060 390 1088 470 1085",
  "B 520 830 535 920 550 1030 525 1100",
  "B 560 1070 610 1120 E 650 110 690 225 600 370 540 425 560 560 520 740",
  "E 490 830 480 868",
  "B 720 90 690 140",
  "B 610 370 590 436",
  "D 1390 940 1410 990 1407 1035",
  "E -30 790 0 740",
];

const freeways = [
  "A 900 118 908 140 898 175 830 310 760 455 715 560 680 690 645 800 633 880 640 940 650 1000 652 1095 635 1140 D 628 100 633 300 640 400 660 550 690 690 715 730 760 748 860 752 930 735 960 780 1020 820 1150 850 1200 865 1240 910 1300 1010 1350 1038 1430 1045 1500 1040 E 170 1033 420 1048",
  "D 860 752 975 690 1150 580 1200 555 1280 515 1345 475 1390 415 1450 370 1500 352 E 0 370 90 330 140 295 220 272 270 272 330 258 400 245 470 215",
  "A 588 960 640 938 760 935 880 915 960 890 1080 880 1180 882 1260 915 1335 950 1380 1020 1400 1060 1435 1080 1500 1072 B 60 1070 92 1105 95 1140 E 105 140 120 210 130 300",
  "E 470 215 470 160 490 105 550 105 740 95 850 97 970 130 1090 130 1160 115 1260 95 F 180 95 280 92 370 93 440 125 520 190 570 210 700 222 840 238 880 238 963 207",
  "E 470 215 475 280 530 345 518 430 530 480 520 600 490 690 490 760 540 850 600 925 640 985",
  "B 250 98 280 95 310 115 340 165 400 215 500 310 580 370 630 380 690 450",
  "B 650 40 655 130 660 220 620 300 618 375",
  "B 880 480 918 555 960 660 995 735 1080 770 1200 805 1230 830 1260 860 1272 920 1270 1000 1268 1140 F 185 0 182 150 195 300 197 490 180 540 125 600 60 640 0 675 E 980 735 880 795 800 845 700 925 600 1000",
];

const interstates = [
  [354, 814, "664"], [692, 880, "564"], [272, 1268, "664"], [462, 1333, "264"],
  [705, 1410, "464"], [844, 1188, "264"], [459, 1439, "64"], [849, 1406, "64"], [964, 1103, "64"],
];
const usRoutes = [
  [767, 851, "460"], [132, 1116, "17"], [865, 1142, "58"], [1101, 961, "60"], [1085, 1000, "13"],
  [991, 1050, "13"], [1191, 1192, "58"], [517, 1255, "58"], [597, 1294, "17"], [727, 1324, "460"],
  [843, 1364, "13"], [228, 1436, "58"], [530, 1448, "460"],
];
const stateRoutes = [
  [608, 889, "337"], [670, 913, "406"], [829, 922, "194"], [922, 963, "192"], [763, 1065, "247"],
  [816, 1046, "165"], [867, 1099, "166"], [1137, 1032, "225"], [399, 1084, "164"], [76, 1151, "627"],
  [437, 1279, "337"], [68, 1278, "337"], [1079, 1259, "165"], [987, 1407, "190"], [694, 1497, "166"],
];
const towns = [
  [701, 1173, 31, "Norfolk"], [665, 1229, 28, "Portsmouth"], [695, 1475, 32, "Chesapeake"],
  [334, 1411, 23, "Bowers Hill"], [70, 1017, 22, "on"], [1144, 1306, 24, "N"], [1215, 1306, 24, "A"], [1141, 1397, 24, "S"],
];
const districts = [
  [794, 817, "OCEAN VIEW"], [1157, 938, "CHIC'S BEACH"], [657, 1119, "GHENT"],
  [933, 1141, "JANAF"], [738, 1376, "SOUTH NORFOLK"], [920, 1498, "GREENBRIER"],
];

const Interstate = ({ x, y, label }) => {
  const w = label.length > 2 ? 23 : 16;
  return (
    <g transform={`translate(${x} ${y})`}>
      <path d={`M${-w + 2} -15Q${-w / 2} -11 0 -15.500Q${w / 2} -11 ${w - 2} -15L${w} -8H${-w}Z`} fill="#d9605b" />
      <path d={`M${-w} -10H${w}V-7H${-w}Z`} fill="#fff" />
      <path d={`M${-w} -8H${w}Q${w + 1} 10 0 15.500Q${-w - 1} 10 ${-w} -8Z`} fill="#3a78c9" />
      <text y="8" textAnchor="middle" fontSize="18" fontWeight="700" fill="#fff">{label}</text>
    </g>
  );
};
const UsRoute = ({ x, y, label }) => {
  const w = label.length > 2 ? 20 : 18;
  return (
    <g transform={`translate(${x} ${y})`}>
      <path
        d={`M${-w + 3} -15Q${-w + 8} -11 ${-w / 2 + 3} -14Q-3 -13 0 -15Q3 -13 ${w / 2 - 3} -14Q${w - 8} -11 ${w - 3} -15L${w} -11Q${w - 4} -5 ${w} 2Q${w + 1} 13 ${w - 8} 13H5L0 15L-5 13H${-w + 8}Q${-w - 1} 13 ${-w} 2Q${-w + 4} -5 ${-w} -11Z`}
        fill="#fff" stroke="#666" strokeWidth="1.800" />
      <text y="7" textAnchor="middle" fontSize="18" fill="#333">{label}</text>
    </g>
  );
};
const StateRoute = ({ x, y, label }) => (
  <g transform={`translate(${x} ${y})`}>
    <rect x="-20" y="-13" width="40" height="26" rx="12" fill="#fff" stroke="#666" strokeWidth="1.800" />
    <text y="6" textAnchor="middle" fontSize="18" fill="#333">{label}</text>
  </g>
);

const MapDrawing = () => (
  <MapArt viewBox="69 502 1152 1000" preserveAspectRatio="xMidYMid slice" role="img" aria-label="Map of Norfolk, Virginia">
    <defs>
      <linearGradient id="marker" x1="0" y1="0" x2="0" y2="1">
        <stop offset="0" stopColor="#e5736a" />
        <stop offset="1" stopColor="#bb3f3b" />
      </linearGradient>
    </defs>
    <rect x="69" y="502" width="1152" height="1000" fill="#a3ccff" />
    <path d={areas(beige)} fill="#f0ede5" />
    <path d={areas(land)} fill="#e8e7e3" />
    <path d={areas(tan)} fill="#dfd9d3" />
    <path d={areas(campus)} fill="#e9e9ea" />
    <path d={areas(pink)} fill="#f8eaf0" />
    <path d={areas(parks)} fill="#cae6a3" />
    <path d={areas(lightParks)} fill="#d6eabb" />
    <path d={areas(water)} fill="#a3ccff" />
    <g fill="none" strokeLinejoin="round" strokeLinecap="round">
      <path d={lines(rails)} stroke="#d4d4d4" strokeWidth="1.300" />
      <path d={lines(docks)} stroke="#d4d4d4" strokeWidth="3" />
      <path d={lines(streets)} stroke="#fff" strokeWidth="1.300" />
      <path d={lines(avenues)} stroke="#fff" strokeWidth="2.800" />
      <path d={lines(highways)} stroke="#e7d08a" strokeWidth="6.600" />
      <path d={lines(highways)} stroke="#ffefb8" strokeWidth="4.200" />
      <path d={lines(freeways)} stroke="#eab36f" strokeWidth="8" />
      <path d={lines(freeways)} stroke="#ffd599" strokeWidth="5.400" />
    </g>
    {stateRoutes.map(([x, y, t], i) => <StateRoute key={i} x={x} y={y} label={t} />)}
    {usRoutes.map(([x, y, t], i) => <UsRoute key={i} x={x} y={y} label={t} />)}
    {interstates.map(([x, y, t], i) => <Interstate key={i} x={x} y={y} label={t} />)}
    <g textAnchor="middle" stroke="#f4f2ee" strokeWidth="4" strokeLinejoin="round" paintOrder="stroke">
      {districts.map(([x, y, t]) => <text key={t} x={x} y={y} fontSize="18" fontWeight="500" fill="#957c57">{t}</text>)}
      {towns.map(([x, y, size, t]) => <text key={t} x={x} y={y} fontSize={size} fill="#3d3523">{t}</text>)}
    </g>
    <path d="M701.500 1095a23 23 0 0 1 23 23c0 14-12 17-17.500 28v14q0 5-5.500 5t-5.500-5v-14c-5.500-11-17.500-14-17.500-28a23 23 0 0 1 23-23z" fill="url(#marker)" />
    <circle cx="701.5" cy="1117" r="5.5" fill="#fff" />
  </MapArt>
);

const Wallpaper = () => (
  <WallpaperArt viewBox="0 0 1364 1664" preserveAspectRatio="none" aria-hidden="true">
    <defs>
      <linearGradient id="sky" x1="0" y1="0" x2="0" y2="1">
        <stop offset="0" stopColor="#90a9b9" />
        <stop offset="0.050" stopColor="#b6cad8" />
        <stop offset="0.090" stopColor="#cfdfea" />
        <stop offset="0.140" stopColor="#bdd0dd" />
        <stop offset="0.180" stopColor="#8ea6c2" />
        <stop offset="0.250" stopColor="#9cafc8" />
        <stop offset="0.320" stopColor="#9db1c4" />
        <stop offset="0.400" stopColor="#8598b0" />
        <stop offset="0.440" stopColor="#93aec1" />
        <stop offset="0.520" stopColor="#a9c6d6" />
      </linearGradient>
      <linearGradient id="cliff" x1="0" y1="0" x2="0" y2="1">
        <stop offset="0" stopColor="#3f4e61" />
        <stop offset="0.220" stopColor="#3a4659" />
        <stop offset="0.350" stopColor="#182a40" />
        <stop offset="0.480" stopColor="#304762" />
        <stop offset="0.540" stopColor="#1d2130" />
        <stop offset="0.620" stopColor="#1a2c3a" />
        <stop offset="0.760" stopColor="#162722" />
        <stop offset="0.860" stopColor="#263320" />
        <stop offset="0.940" stopColor="#1e282e" />
        <stop offset="1" stopColor="#141f16" />
      </linearGradient>
      <linearGradient id="west" x1="0" y1="0" x2="0" y2="1">
        <stop offset="0" stopColor="#90a7b8" />
        <stop offset="0.080" stopColor="#7892ab" />
        <stop offset="0.145" stopColor="#506680" />
        <stop offset="0.160" stopColor="#4a3540" />
        <stop offset="0.200" stopColor="#70403f" />
        <stop offset="0.240" stopColor="#43303a" />
        <stop offset="0.270" stopColor="#1c2230" />
        <stop offset="0.450" stopColor="#3a4350" />
        <stop offset="0.480" stopColor="#1c2320" />
        <stop offset="0.650" stopColor="#20262c" />
        <stop offset="0.770" stopColor="#0d1316" />
        <stop offset="0.850" stopColor="#17241a" />
        <stop offset="1" stopColor="#0e1712" />
      </linearGradient>
      <filter id="rock" x="0" y="0" width="100%" height="100%">
        <feTurbulence type="fractalNoise" baseFrequency="0.035 0.050" numOctaves="5" seed="7" />
        <feColorMatrix values="0 0 0 0 0.450  0 0 0 0 0.580  0 0 0 0 0.700  3 0 0 0 -1.600" />
        <feComposite in2="SourceGraphic" operator="in" />
      </filter>
      <filter id="shade" x="0" y="0" width="100%" height="100%">
        <feTurbulence type="fractalNoise" baseFrequency="0.050 0.025" numOctaves="5" seed="3" />
        <feColorMatrix values="0 0 0 0 0.020  0 0 0 0 0.040  0 0 0 0 0.070  0 3 0 0 -1.200" />
        <feComposite in2="SourceGraphic" operator="in" />
      </filter>
    </defs>
    <rect width="1364" height="1664" fill="#0f1915" />
    <rect width="20" height="1664" fill="url(#west)" />
    <rect width="20" height="1404" y="260" filter="url(#shade)" opacity="0.700" />
    <rect x="1270" width="94" height="1664" fill="url(#sky)" />
    {["cliff", "rock", "shade"].map((kind) => (
      <path
        key={kind}
        d="M1270 783L1284 790 1296 799 1313 813 1320 830 1327 846 1330 862 1340 870 1352 895 1364 942V1664H1270Z"
        fill={kind === "cliff" ? "url(#cliff)" : "#000"}
        opacity={{ cliff: 1, rock: 0.3, shade: 0.7 }[kind]}
        filter={kind === "cliff" ? undefined : `url(#${kind})`}
      />
    ))}
    <path d="M1308 1224L1322 1214 1345 1218 1364 1215V1268L1345 1274 1330 1270 1306 1262 1312 1245Z" fill="#1a1720" opacity="0.800" />
  </WallpaperArt>
);

const GoogleLetters = () => (
  <>
    <Tint $color="#4285f4">G</Tint>
    <Tint $color="#ea4335">o</Tint>
    <Tint $color="#fbbc05">o</Tint>
    <Tint $color="#4285f4">g</Tint>
    <Tint $color="#34a853">l</Tint>
    <Tint $color="#ea4335">e</Tint>
  </>
);

const bookmarks = [
  ["gmail", GmailIcon],
  ["Facebook", FacebookIcon],
  ["Reddit", RedditIcon],
  ["TGP", GearIcon],
  ["MyFitnessPal", RunnerIcon],
  ["YouTube", YouTubeIcon],
];

const suggestions = [
  { main: "Hampton", rest: <>VA <b>23669</b>, United States</> },
  { main: "23669", bold: true, rest: "Ocean Gateway, Mardela Springs, MD, United States" },
  { main: "23669", bold: true, rest: "Keen Road, Deal Island, MD, United States" },
  { main: "23669", bold: true, rest: "Dusky Meadow Way, California, MD, United States" },
  { main: "23669", bold: true, rest: "Mezick Road, Tyaskin, MD, United States" },
];

export default function App() {
  return (
    <Desktop>
      <GlobalStyle />
      <Wallpaper />
      <Window>
        <TabStrip>
          <TabsBefore>
            <PinnedTab />
            <PinnedShadow />
            <TabStub $width={94} />
            <TabStub $width={200} />
          </TabsBefore>
          <TabsAfter />
        </TabStrip>
        <Chrome>
          <Toolbar>
            <BackButton aria-label="Back"><BackArrow /></BackButton>
            <ForwardButton aria-label="Forward"><ForwardArrow /></ForwardButton>
            <UrlBar>
              <InfoIcon />
              <FieldRule $margin="0 10px 0 12px" />
              <Address><Host>localhost</Host>:8888</Address>
              <FieldRule $margin="0 14px 0 0" />
              <ToolButton aria-label="Reload"><ReloadIcon /></ToolButton>
            </UrlBar>
            <SearchBox>
              <SearchIcon />
              <SearchInput type="search" placeholder="Search" aria-label="Search" />
            </SearchBox>
            <ToolIcons>
              <ToolButton aria-label="Bookmark this page"><StarIcon /></ToolButton>
              <ToolRule $height={36} $gap={11} />
              <ToolButton aria-label="Show bookmarks" $gap={10}><ListIcon /></ToolButton>
              <ToolButton aria-label="Downloads" $gap={28}><DownloadIcon /></ToolButton>
              <ToolButton aria-label="More tools" $gap={40}><Chevrons color="#4a4a4a" /></ToolButton>
              <ToolRule $height={80} $gap={21} $fade />
              <ToolButton aria-label="Open menu" $gap={26}><MenuIcon /></ToolButton>
            </ToolIcons>
          </Toolbar>
          <Bookmarks>
            {bookmarks.map(([name, Icon]) => (
              <Bookmark key={name} href="#"><Icon />{name}</Bookmark>
            ))}
            <Spacer />
            <button aria-label="More bookmarks"><Chevrons color="#888" /></button>
          </Bookmarks>
        </Chrome>
        <Header>
          <Brand>iFind</Brand>
          <Tagline>A Simple Tool for Looking up Places in the World</Tagline>
        </Header>
        <Main>
          <SearchForm onSubmit={(e) => e.preventDefault()}>
            <Question htmlFor="place">Where would you like to see?</Question>
            <PlaceInput id="place" type="text" defaultValue="23669" autoComplete="off" />
            <Suggestions>
              <ul>
                {suggestions.map((s, i) => (
                  <Suggestion key={i}>
                    <PinIcon />
                    <SuggestionText><Match $bold={s.bold}>{s.main}</Match>{s.rest}</SuggestionText>
                  </Suggestion>
                ))}
              </ul>
              <PoweredBy>powered by<Wordmark><GoogleLetters /></Wordmark></PoweredBy>
            </Suggestions>
          </SearchForm>
          <MapPanel>
            <MapDrawing />
            <MapTypeControl />
            <InfoWindow>
              <InfoTail width="38" height="44" viewBox="0 0 38 44">
                <path d="M1 0h35L18 42z" fill="#fff" />
              </InfoTail>
              <InfoTitle>Norfolk</InfoTitle>
              <InfoAddress>Norfolk, VA, USA</InfoAddress>
              <CloseButton aria-label="Close">
                <svg width="20" height="20" viewBox="0 0 20 20" stroke="#a6a6a6" strokeWidth="4">
                  <path d="m2 2 16 16M18 2 2 18" />
                </svg>
              </CloseButton>
            </InfoWindow>
            <MapControls>
              <ControlCard>
                <ControlButton $tall aria-label="Street View"><PegmanIcon /></ControlButton>
              </ControlCard>
              <ControlCard>
                <ControlButton aria-label="Zoom in">
                  <svg width="22" height="22" viewBox="0 0 22 22" fill="#666"><path d="M8 0h6v8h8v6h-8v8H8v-8H0V8h8z" /></svg>
                </ControlButton>
                <ControlRule />
                <ControlButton aria-label="Zoom out">
                  <svg width="22" height="6" viewBox="0 0 22 6" fill="#666"><path d="M0 0h22v6H0z" /></svg>
                </ControlButton>
              </ControlCard>
            </MapControls>
            <MapLogo href="#" aria-label="Google"><GoogleLetters /></MapLogo>
            <Attribution>
              <AttributionItem>Map data ©2016 Google</AttributionItem>
              <AttributionItem as="a" href="#">Terms of Use</AttributionItem>
              <AttributionItem as="a" href="#">Report a map error</AttributionItem>
            </Attribution>
          </MapPanel>
        </Main>
      </Window>
    </Desktop>
  );
}
